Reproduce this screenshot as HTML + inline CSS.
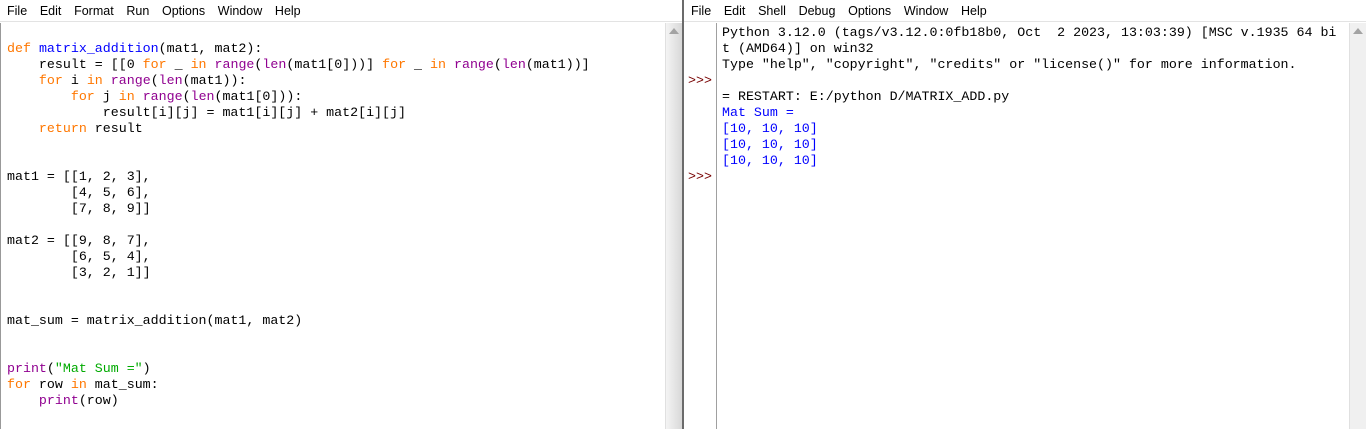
<!DOCTYPE html>
<html><head><meta charset="utf-8"><style>
html,body{margin:0;padding:0;width:1366px;height:429px;overflow:hidden;background:#fff;}
.menu{position:absolute;top:0;height:22px;background:#fff;font-family:"Liberation Sans",sans-serif;font-size:12.5px;line-height:23px;color:#000;border-bottom:1px solid #e3e3e3;}
.menu span{margin-right:12.7px;}
pre{margin:0;font-family:"Liberation Mono",monospace;font-size:13.3px;line-height:16px;position:absolute;white-space:pre;color:#000;}
.k{color:#ff7700}.d{color:#0000ff}.b{color:#900090}.s{color:#00aa00}.o{color:#0000ff}.p{color:#770000}
</style></head><body>
<div class="menu" style="left:0;width:682px;padding-left:7px;box-sizing:border-box"><span>File</span><span>Edit</span><span>Format</span><span>Run</span><span>Options</span><span>Window</span><span>Help</span></div>
<div style="position:absolute;left:0;top:23px;width:1px;height:406px;background:#999"></div>
<div style="position:absolute;left:665px;top:23px;width:17px;height:406px;background:linear-gradient(90deg,#f4f4f4,#d6d6d6);border-left:1px solid #e0e0e0"></div>
<div style="position:absolute;left:669px;top:28px;width:0;height:0;border-left:5px solid transparent;border-right:5px solid transparent;border-bottom:6px solid #a3a3a3"></div>
<div style="position:absolute;left:682px;top:0;width:2px;height:429px;background:#6b6b6b"></div>
<pre style="left:7px;top:41px"><span class="k">def</span> <span class="d">matrix_addition</span>(mat1, mat2):
    result = [[0 <span class="k">for</span> _ <span class="k">in</span> <span class="b">range</span>(<span class="b">len</span>(mat1[0]))] <span class="k">for</span> _ <span class="k">in</span> <span class="b">range</span>(<span class="b">len</span>(mat1))]
    <span class="k">for</span> i <span class="k">in</span> <span class="b">range</span>(<span class="b">len</span>(mat1)):
        <span class="k">for</span> j <span class="k">in</span> <span class="b">range</span>(<span class="b">len</span>(mat1[0])):
            result[i][j] = mat1[i][j] + mat2[i][j]
    <span class="k">return</span> result


mat1 = [[1, 2, 3],
        [4, 5, 6],
        [7, 8, 9]]

mat2 = [[9, 8, 7],
        [6, 5, 4],
        [3, 2, 1]]


mat_sum = matrix_addition(mat1, mat2)


<span class="b">print</span>(<span class="s">"Mat Sum ="</span>)
<span class="k">for</span> row <span class="k">in</span> mat_sum:
    <span class="b">print</span>(row)
</pre>
<div class="menu" style="left:684px;width:682px;padding-left:7px;box-sizing:border-box"><span>File</span><span>Edit</span><span>Shell</span><span>Debug</span><span>Options</span><span>Window</span><span>Help</span></div>
<div style="position:absolute;left:716px;top:23px;width:1px;height:406px;background:#a0a0a0"></div>
<div style="position:absolute;left:1349px;top:23px;width:17px;height:406px;background:#f0f0f0;border-left:1px solid #e0e0e0"></div>
<div style="position:absolute;left:1353px;top:28px;width:0;height:0;border-left:5px solid transparent;border-right:5px solid transparent;border-bottom:6px solid #a3a3a3"></div>
<pre style="left:688px;top:73px" class="p">&gt;&gt;&gt;</pre>
<pre style="left:688px;top:169px" class="p">&gt;&gt;&gt;</pre>
<pre style="left:722px;top:25px">Python 3.12.0 (tags/v3.12.0:0fb18b0, Oct  2 2023, 13:03:39) [MSC v.1935 64 bi
t (AMD64)] on win32
Type "help", "copyright", "credits" or "license()" for more information.

= RESTART: E:/python D/MATRIX_ADD.py
<span class="o">Mat Sum =
[10, 10, 10]
[10, 10, 10]
[10, 10, 10]</span>
</pre>
</body></html>
